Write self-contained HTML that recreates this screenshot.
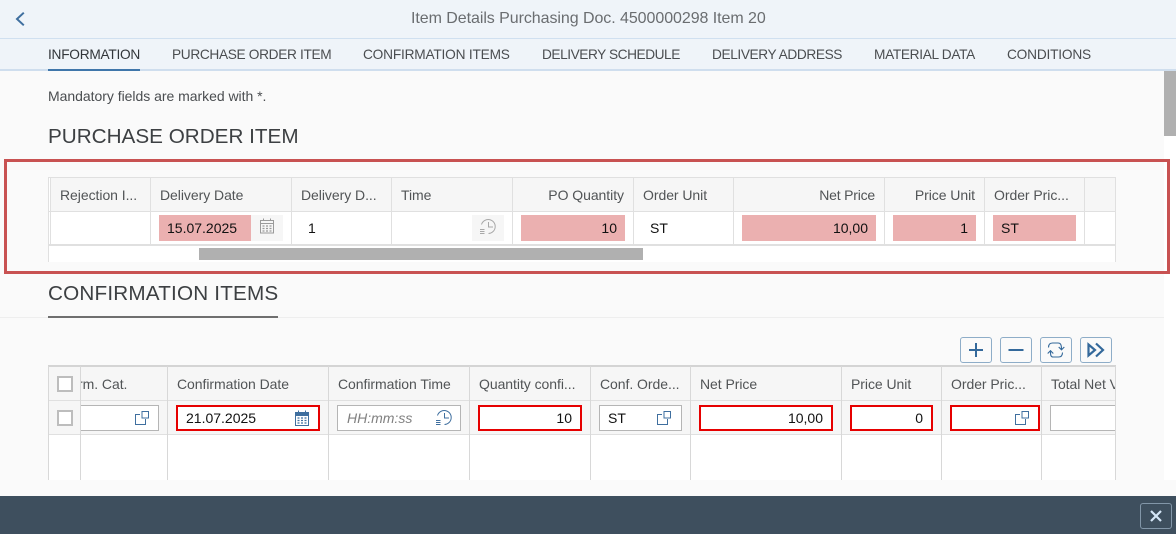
<!DOCTYPE html>
<html><head><meta charset="utf-8">
<style>
html,body{margin:0;padding:0;width:1176px;height:534px;overflow:hidden;background:#fafafa;font-family:"Liberation Sans",sans-serif;font-size:14px;color:#32363a}
div,span{position:absolute;box-sizing:border-box}
.t{white-space:nowrap;line-height:20px;height:20px}
.h{color:#515456;letter-spacing:-0.05px}
.tab{color:#4a4d50;top:45px;font-size:13.7px}
.r{background:#fff}
.l{background:#e0e0e0}
.l2{background:#d8d8d8}
.pk{background:#ebb0b0;height:26px;top:215px}
.in{height:26px;top:405px;background:#fff;border:1px solid #b5b5b5}
.red{border:2px solid #e60000}
.v{color:#111}
svg{position:absolute;overflow:visible}
.btn{top:337px;width:32px;height:26px;border:1px solid #8eadc8;border-radius:3px;background:#fafafa}
</style></head><body>
<div style="left:0;top:0;width:1176px;height:70px;background:#eff4f9"></div>
<div style="left:0;top:38px;width:1176px;height:1px;background:#d0e0f0"></div>
<div style="left:0;top:69px;width:1176px;height:2px;background:#cfdeee"></div>
<div style="left:48px;top:69px;width:92px;height:2px;background:#3f76aa"></div>
<svg style="left:14px;top:11px" width="14" height="16" viewBox="0 0 14 16"><path d="M9.800 1.700 L3 8 L9.800 14.300" fill="none" stroke="#3f6f9f" stroke-width="2"/></svg>
<span class="t" style="left:411px;top:9px;color:#6a6d70;font-size:16px;letter-spacing:-0.06px">Item Details Purchasing Doc. 4500000298 Item 20</span>
<span class="t tab" style="left:48px;color:#32363a;letter-spacing:-0.25px">INFORMATION</span>
<span class="t tab" style="left:172px;letter-spacing:-0.34px">PURCHASE ORDER ITEM</span>
<span class="t tab" style="left:363px;letter-spacing:-0.2px">CONFIRMATION ITEMS</span>
<span class="t tab" style="left:542px;letter-spacing:-0.45px">DELIVERY SCHEDULE</span>
<span class="t tab" style="left:712px;letter-spacing:-0.4px">DELIVERY ADDRESS</span>
<span class="t tab" style="left:874px;letter-spacing:-0.33px">MATERIAL DATA</span>
<span class="t tab" style="left:1007px;letter-spacing:-0.2px">CONDITIONS</span>
<span class="t" style="left:48px;top:86px;color:#4a4d50;letter-spacing:-0.03px">Mandatory fields are marked with *.</span>
<span class="t" style="left:48px;top:127px;font-size:20.7px;color:#3d4043">PURCHASE ORDER ITEM</span>

<div style="left:1164px;top:71px;width:12px;height:409px;background:#fff"></div>
<div style="left:1164px;top:71px;width:12px;height:65px;background:#b0b0b0"></div>

<!-- red box -->
<div style="left:4px;top:159px;width:1166px;height:115px;border:3px solid #c85252"></div>

<!-- table 1 -->
<div style="left:48px;top:178px;width:1068px;height:84px;background:#fff"></div>
<div style="left:50px;top:178px;width:1065px;height:33px;background:#f6f6f6"></div>
<div class="l" style="left:48px;top:177px;width:1068px;height:1px"></div>
<div class="l" style="left:48px;top:211px;width:1068px;height:1px"></div>
<div class="l" style="left:48px;top:244px;width:1068px;height:2px"></div>
<div class="l" style="left:48px;top:177px;width:1px;height:85px"></div>
<div class="l" style="left:50px;top:177px;width:1px;height:68px"></div>
<div class="l" style="left:150px;top:177px;width:1px;height:68px"></div>
<div class="l" style="left:291px;top:177px;width:1px;height:68px"></div>
<div class="l" style="left:391px;top:177px;width:1px;height:68px"></div>
<div class="l" style="left:512px;top:177px;width:1px;height:68px"></div>
<div class="l" style="left:633px;top:177px;width:1px;height:68px"></div>
<div class="l" style="left:733px;top:177px;width:1px;height:68px"></div>
<div class="l" style="left:884px;top:177px;width:1px;height:68px"></div>
<div class="l" style="left:984px;top:177px;width:1px;height:68px"></div>
<div class="l" style="left:1084px;top:177px;width:1px;height:68px"></div>
<div class="l" style="left:1115px;top:177px;width:1px;height:85px"></div>
<div style="left:199px;top:248px;width:444px;height:12px;background:#b0b0b0"></div>

<span class="t h" style="left:60px;top:185px">Rejection I...</span>
<span class="t h" style="left:160px;top:185px">Delivery Date</span>
<span class="t h" style="left:301px;top:185px">Delivery D...</span>
<span class="t h" style="left:401px;top:185px">Time</span>
<span class="t h" style="right:552px;top:185px">PO Quantity</span>
<span class="t h" style="left:643px;top:185px">Order Unit</span>
<span class="t h" style="right:301px;top:185px;letter-spacing:-0.2px">Net Price</span>
<span class="t h" style="right:201px;top:185px">Price Unit</span>
<span class="t h" style="left:994px;top:185px">Order Pric...</span>

<div class="pk" style="left:159px;width:92px"></div>
<div style="left:251px;top:215px;width:32px;height:26px;background:#f6f6f6"></div>
<svg style="left:260px;top:218px" width="14" height="16" viewBox="0 0 14 16" fill="none" stroke="#9a9a9a"><rect x="0.500" y="2.500" width="13" height="12.500"/><path d="M0.500 5.500H13.500M3.500 0.500V3M10.500 0.500V3" /><path d="M2.500 8h2M6 8h2M9.500 8h2M2.500 10.500h2M6 10.500h2M9.500 10.500h2M2.500 13h2M6 13h2M9.500 13h2" stroke-width="1.200"/></svg>
<span class="t v" style="left:167px;top:218px">15.07.2025</span>
<span class="t v" style="left:308px;top:218px">1</span>
<div style="left:472px;top:215px;width:32px;height:26px;background:#f6f6f6"></div>
<svg style="left:479px;top:218px" width="18" height="18" viewBox="0 0 18 18" fill="none" stroke="#a8a8a8"><path d="M2.500 6.500A7 7 0 1 1 9.500 15.500"/><path d="M9.500 4V9H14"/><path d="M1 11.500H5.500M1 13.500H5.500M1 15.500H5.500"/></svg>
<div class="pk" style="left:521px;width:104px"></div>
<span class="t v" style="right:559px;top:218px">10</span>
<span class="t v" style="left:650px;top:218px">ST</span>
<div class="pk" style="left:742px;width:134px"></div>
<span class="t v" style="right:308px;top:218px">10,00</span>
<div class="pk" style="left:893px;width:83px"></div>
<span class="t v" style="right:208px;top:218px">1</span>
<div class="pk" style="left:993px;width:83px"></div>
<span class="t v" style="left:1001px;top:218px">ST</span>

<!-- section 2 -->
<div style="left:0;top:317px;width:1164px;height:1px;background:#eeeeee"></div>
<div style="left:48px;top:316px;width:230px;height:2px;background:#6f6f6f"></div>
<span class="t" style="left:48px;top:284px;font-size:20.7px;color:#3d4043;letter-spacing:0.18px">CONFIRMATION ITEMS</span>

<div class="btn" style="left:960px"></div>
<div class="btn" style="left:1000px"></div>
<div class="btn" style="left:1040px"></div>
<div class="btn" style="left:1080px"></div>
<svg style="left:960px;top:337px" width="152" height="26" viewBox="0 0 152 26" fill="none" stroke="#34699b" stroke-width="2">
<path d="M16 6V20M9 13H23"/>
<path d="M48.500 13H63.500"/>
<g stroke-width="1.100"><path d="M88.500 10.500C88.500 8 89.500 6 92.500 6H98C100.500 6 101.500 7.500 101.500 12.500M98.700 10L101.500 12.800L104.300 10"/><path d="M102.500 15.500C102.500 18 101.500 20 98.500 20H93C90.500 20 90.500 17.500 90.500 14M87.700 16.500L90.500 13.700L93.300 16.500"/></g>
<path d="M128.500 7.500V18.500L135 13Z M136 6.500L143 13L136 19.500" stroke-width="2.200"/>
</svg>

<!-- table 2 -->
<div style="left:48px;top:366px;width:1068px;height:114px;background:#fff"></div>
<div style="left:48px;top:366px;width:1068px;height:68px;background:#f6f6f6"></div>
<div style="left:48px;top:365px;width:1068px;height:2px;background:#d4d4d4"></div>
<div class="l" style="left:48px;top:400px;width:1068px;height:1px"></div>
<div class="l" style="left:48px;top:434px;width:1068px;height:1px"></div>
<div class="l2" style="left:48px;top:366px;width:1px;height:114px"></div>
<div class="l2" style="left:80px;top:366px;width:1px;height:114px"></div>
<div class="l2" style="left:167px;top:366px;width:1px;height:114px"></div>
<div class="l2" style="left:328px;top:366px;width:1px;height:114px"></div>
<div class="l2" style="left:469px;top:366px;width:1px;height:114px"></div>
<div class="l2" style="left:590px;top:366px;width:1px;height:114px"></div>
<div class="l2" style="left:690px;top:366px;width:1px;height:114px"></div>
<div class="l2" style="left:841px;top:366px;width:1px;height:114px"></div>
<div class="l2" style="left:941px;top:366px;width:1px;height:114px"></div>
<div class="l2" style="left:1041px;top:366px;width:1px;height:114px"></div>
<div class="l2" style="left:1115px;top:366px;width:1px;height:114px"></div>

<div style="left:57px;top:376px;width:16px;height:16px;background:#fff;border:2px solid #bdbdbd"></div>
<div style="left:57px;top:410px;width:16px;height:16px;background:#fff;border:2px solid #bdbdbd"></div>

<div style="left:81px;top:366px;width:86px;height:34px;overflow:hidden"><span class="t h" style="left:-3px;top:8px">rm. Cat.</span></div>
<span class="t h" style="left:177px;top:374px">Confirmation Date</span>
<span class="t h" style="left:338px;top:374px">Confirmation Time</span>
<span class="t h" style="left:479px;top:374px">Quantity confi...</span>
<span class="t h" style="left:600px;top:374px">Conf. Orde...</span>
<span class="t h" style="left:700px;top:374px">Net Price</span>
<span class="t h" style="left:851px;top:374px">Price Unit</span>
<span class="t h" style="left:951px;top:374px">Order Pric...</span>
<div style="left:1042px;top:366px;width:73px;height:34px;overflow:hidden"><span class="t h" style="left:9px;top:8px">Total Net Value</span></div>

<div class="in" style="left:81px;width:78px;border-left:0"></div>
<div class="in red" style="left:176px;width:144px"></div>
<span class="t v" style="left:186px;top:408px">21.07.2025</span>
<div class="in" style="left:337px;width:124px"></div>
<span class="t" style="left:347px;top:408px;color:#808080;font-style:italic">HH:mm:ss</span>
<div class="in red" style="left:478px;width:104px"></div>
<span class="t v" style="right:604px;top:408px">10</span>
<div class="in" style="left:599px;width:83px"></div>
<span class="t v" style="left:608px;top:408px">ST</span>
<div class="in red" style="left:699px;width:134px"></div>
<span class="t v" style="right:353px;top:408px">10,00</span>
<div class="in red" style="left:850px;width:83px"></div>
<span class="t v" style="right:253px;top:408px">0</span>
<div class="in red" style="left:950px;width:90px"></div>
<div class="in" style="left:1050px;width:65px;border-right:0"></div>

<svg style="left:135px;top:410px" width="15" height="16" viewBox="0 0 15 16" fill="none" stroke="#3f6f9f"><path d="M5 4.500H0.500V14.500H10.500V9"/><rect x="7" y="1.500" width="6.500" height="6.500"/></svg>
<svg style="left:657px;top:410px" width="15" height="16" viewBox="0 0 15 16" fill="none" stroke="#3f6f9f"><path d="M5 4.500H0.500V14.500H10.500V9"/><rect x="7" y="1.500" width="6.500" height="6.500"/></svg>
<svg style="left:1015px;top:410px" width="15" height="16" viewBox="0 0 15 16" fill="none" stroke="#3f6f9f"><path d="M5 4.500H0.500V14.500H10.500V9"/><rect x="7" y="1.500" width="6.500" height="6.500"/></svg>
<svg style="left:295px;top:410px" width="15" height="16" viewBox="0 0 15 16" fill="none" stroke="#3f6f9f"><rect x="0.500" y="2.500" width="13" height="13"/><path d="M0.500 3H13.500V5.500H0.500Z" fill="#3f6f9f"/><path d="M3.500 0.500V3M10.500 0.500V3"/><path d="M2.500 8h2M6 8h2M9.500 8h2M2.500 10.500h2M6 10.500h2M9.500 10.500h2M2.500 13h2M6 13h2M9.500 13h2" stroke-width="1.300"/></svg>
<svg style="left:435px;top:409px" width="18" height="18" viewBox="0 0 18 18" fill="none" stroke="#3f6f9f"><path d="M2.500 6.500A7 7 0 1 1 9.500 15.500"/><path d="M9.500 4V9H14"/><path d="M1 11.500H5.500M1 13.500H5.500M1 15.500H5.500"/></svg>

<!-- footer -->
<div style="left:0;top:496px;width:1176px;height:38px;background:#3e4f5e"></div>
<div style="left:1140px;top:503px;width:32px;height:26px;border:1px solid #8296a8;border-radius:3px"></div>
<svg style="left:1140px;top:503px" width="32" height="26" viewBox="0 0 32 26"><path d="M11 8L21 18M21 8L11 18" fill="none" stroke="#d4e6f7" stroke-width="2.200"/></svg>
</body></html>
